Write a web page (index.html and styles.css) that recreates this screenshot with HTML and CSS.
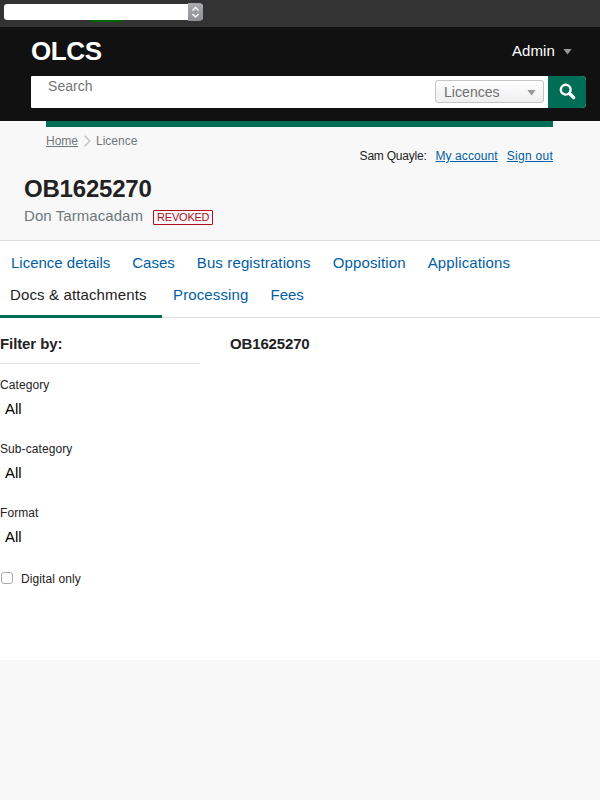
FILE: index.html
```html
<!DOCTYPE html>
<html lang="en">
<head>
<meta charset="utf-8">
<title>OLCS</title>
<link rel="stylesheet" href="styles.css">
</head>
<body>
<div class="toolbar">
  <div class="picker"><span class="picker-button"><svg width="15" height="18" viewBox="0 0 15 18"><path d="M4.5 7.5 7.5 4.5l3 3M4.5 11l3 3 3-3" fill="none" stroke="#fff" stroke-width="1.4"/></svg></span></div>
  <span class="status"></span>
</div>
<header class="header">
  <div class="header-top">
    <div class="logo">OLCS</div>
    <div class="admin">Admin<span class="arrow"></span></div>
  </div>
  <form class="search">
    <span class="placeholder">Search</span>
    <span class="scope">Licences<span class="arrow"></span></span>
    <button class="go" type="button" aria-label="Search"><svg width="18" height="18" viewBox="0 0 18 18" fill="none" stroke="#fff"><circle cx="7.7" cy="6.7" r="4.9" stroke-width="2.4"/><path d="M11.5 10.5 15.6 14.5" stroke-width="3.3" stroke-linecap="round"/></svg></button>
  </form>
</header>
<section class="masthead">
  <div class="strip"></div>
  <div class="crumb-row">
    <nav class="crumbs"><a href="#">Home</a><svg width="7" height="12" viewBox="0 0 7 12"><path d="M.7.7 5.8 6 .7 11.3" fill="none" stroke="#bfc1c3" stroke-width="1.3"/></svg><span>Licence</span></nav>
    <div class="account"><span>Sam Quayle:</span><a href="#">My account</a><a class="sign-out" href="#">Sign out</a></div>
  </div>
  <h1>OB1625270</h1>
  <div class="subtitle">Don Tarmacadam<span class="tag">REVOKED</span></div>
</section>
<main class="main">
  <nav class="tabs">
    <a href="#">Licence details</a><a href="#">Cases</a><a class="wide" href="#">Bus registrations</a><a class="wide" href="#">Opposition</a><a class="wide" href="#">Applications</a>
    <a class="active wide" href="#">Docs &amp; attachments</a><a class="wide" href="#">Processing</a><a href="#">Fees</a>
  </nav>
  <div class="columns">
    <aside class="filters">
      <h2>Filter by:</h2>
      <div class="field"><label>Category</label><span>All</span></div>
      <div class="field"><label>Sub-category</label><span>All</span></div>
      <div class="field"><label>Format</label><span>All</span></div>
      <div class="check"><span class="box"></span>Digital only</div>
    </aside>
    <h2 class="result-title">OB1625270</h2>
  </div>
</main>
</body>
</html>
```
FILE: styles.css
```css
* { box-sizing: border-box; }
body {
  margin: 0;
  background: #f8f8f8;
  color: #222;
  font-family: "Liberation Sans", Arial, sans-serif;
  font-size: 15px;
}
h1, h2 { margin: 0; }
a { color: #005ea5; }

.toolbar { position: relative; height: 27px; padding: 4px 4px; background: #333; }
.picker {
  display: flex;
  justify-content: flex-end;
  width: 199px;
  height: 16px;
  background: #fff;
  border-radius: 3px;
}
.picker-button {
  width: 15px;
  height: 18px;
  margin-top: -1px;
  background: linear-gradient(#abacb0, #8e8f94);
  border-radius: 0 4px 4px 0;
}
.picker-button svg, .go svg, .crumbs svg { display: block; }
.status {
  position: absolute;
  left: 90px;
  top: 20px;
  width: 33px;
  height: 2px;
  background: #006400;
  border-radius: 0 0 2px 2px;
}

.header { height: 94px; padding: 0 14px 13px 31px; background: #111; }
.header-top { display: flex; justify-content: space-between; height: 49px; padding-right: 14px; color: #fff; }
.logo { font-size: 26px; font-weight: bold; line-height: 48px; letter-spacing: -.4px; }
.admin { display: flex; align-items: center; gap: 8px; height: 48px; line-height: 17px; padding-bottom: 1px; letter-spacing: .1px; }
.arrow { width: 9px; height: 6px; background: #999; clip-path: polygon(0 0, 100% 0, 50% 100%); }
.admin .arrow { position: relative; top: 1px; }
.search { display: flex; height: 32px; background: #fff; border-radius: 1px 4px 4px 1px; }
.placeholder { flex: 1; padding: 2px 17px; font-size: 14px; line-height: 17px; color: #757575; letter-spacing: .05px; }
.scope {
  display: flex;
  align-items: center;
  justify-content: space-between;
  width: 109px;
  height: 23px;
  margin: 4px 4px 0 0;
  padding: 0 7px 0 8px;
  border: 1px solid #c5c5c5;
  border-radius: 3px;
  background: linear-gradient(#fff, #eee);
  color: #6f6f6f;
  font-size: 14px;
  letter-spacing: .05px;
}
.scope .arrow { position: relative; top: 1px; }
.go { display: flex; align-items: flex-start; width: 38px; padding: 7px 0 0 10px; border: 0; border-radius: 0 4px 4px 0; background: #006e56; }

.masthead { height: 120px; border-bottom: 1px solid #dedede; }
.strip { height: 6px; margin: 0 47px 0 46px; background: #006e56; }
.crumb-row { display: flex; justify-content: space-between; height: 46px; padding: 7px 47px 0 46px; font-size: 12px; line-height: 14px; }
.crumbs { display: flex; align-items: flex-start; height: 14px; color: #6f777b; }
.crumbs a { color: inherit; }
.crumbs svg { margin: 1px 5px 0 6px; }
.account { display: flex; gap: 9px; padding-top: 15px; letter-spacing: .08px; }
.account span { letter-spacing: -.22px; }
.account .sign-out { letter-spacing: .28px; }
h1 { padding-left: 24px; font-size: 24px; line-height: 32px; letter-spacing: -.2px; }
.subtitle { display: flex; padding: 2px 24px 0; color: #6f777b; line-height: 18px; letter-spacing: .07px; }
.tag {
  height: 15px;
  margin: 3px 0 0 10px;
  padding: 0 3px;
  border: 1px solid #b10e1e;
  border-radius: 1px;
  color: #b10e1e;
  font-size: 11px;
  line-height: 13px;
  letter-spacing: -.22px;
}

.main { height: 419px; background: #fff; }
.tabs { display: flex; flex-wrap: wrap; align-content: flex-start; height: 77px; padding-top: 7px; border-bottom: 1px solid #dedede; }
.tabs a { height: 32px; padding: 0 11px; line-height: 30px; text-decoration: none; }
.tabs .wide { letter-spacing: .13px; }
.tabs .active { width: 162px; height: 38px; padding-left: 10px; border-bottom: 3px solid #006e56; color: #222; }
.columns { display: flex; gap: 30px; padding-top: 16px; }
h2 { font-size: 15px; line-height: 20px; letter-spacing: -.15px; }
.filters { width: 200px; font-size: 12px; }
.filters h2 { height: 30px; margin-bottom: 14px; border-bottom: 1px solid #dedede; letter-spacing: -.1px; }
.field { display: flex; flex-direction: column; height: 64px; }
.field label { line-height: 15px; letter-spacing: .08px; }
.field span { padding-left: 5px; color: #000; font-size: 15px; line-height: 31px; }
.check { display: flex; align-items: center; gap: 8px; height: 18px; padding-left: 1px; letter-spacing: .1px; }
.box { width: 12px; height: 12px; margin-top: -2px; border: 1px solid #aaa; border-radius: 3px; background: #fff; }
```
